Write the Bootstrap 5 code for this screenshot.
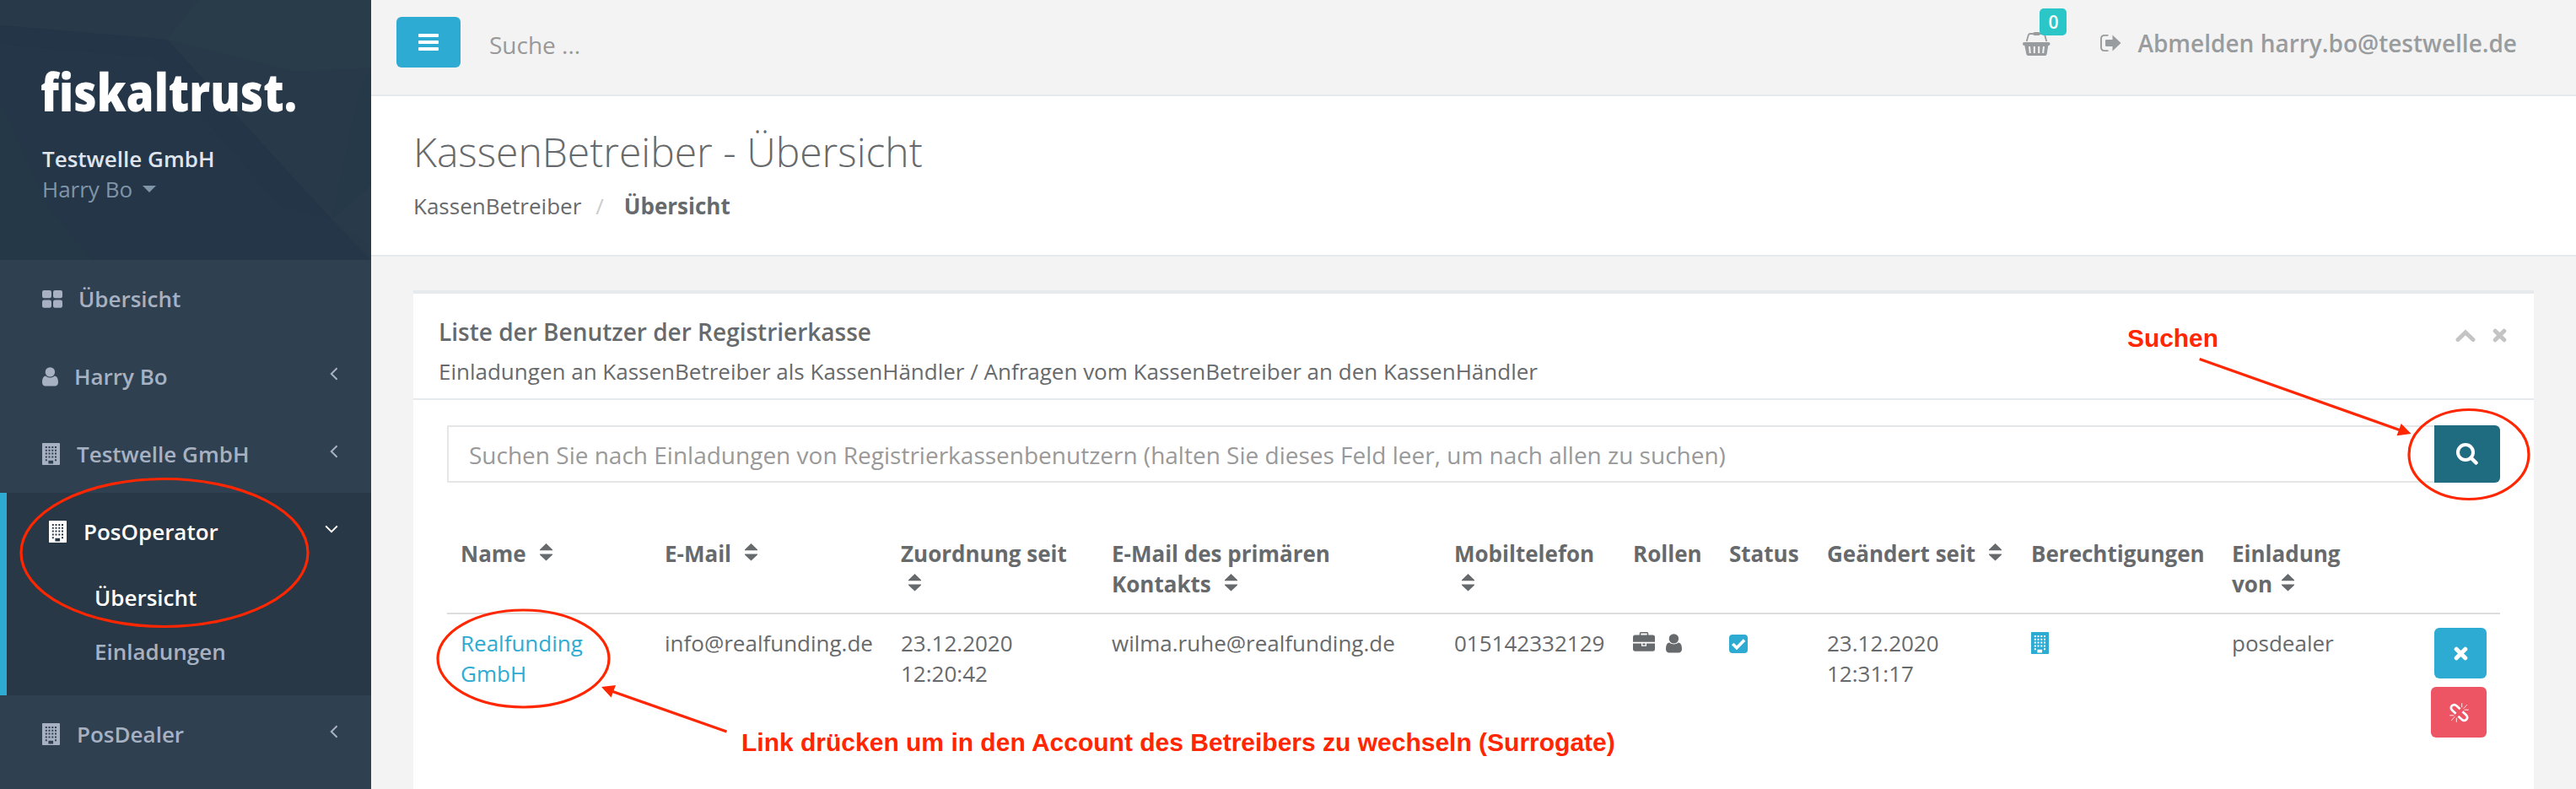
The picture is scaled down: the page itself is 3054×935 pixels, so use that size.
<!DOCTYPE html>
<html lang="de">
<head>
<meta charset="utf-8">
<title>KassenBetreiber - Übersicht</title>
<link rel="stylesheet" href="https://cdn.jsdelivr.net/npm/bootstrap@5.3.0/dist/css/bootstrap.min.css">
<style>
body{font-family:"Open Sans","Noto Sans",sans-serif;font-size:26px;line-height:36px;color:#676a6c;background:#f3f3f3}
a{text-decoration:none;color:inherit}
svg{display:block;flex:none;fill:currentColor}
.shell{height:935px;overflow:hidden}
/* sidebar */
.side{width:440px;background:#2f4050;color:#a7b1c2;font-weight:600;flex:none}
.side-head{height:308px;background:#243647;padding:72px 50px 0 49px}
.side-head .facets{left:0;top:0}
.brand{margin-bottom:26px;overflow:visible}
.brand text{font-weight:800;font-size:62px;fill:#fff}
.company{color:#dfe4ed;padding-left:1px}
.person{color:#8095a8;font-weight:400;padding-left:1px}
.person svg{margin-left:12px}
.item{height:92px;padding:28px 39px 28px 50px;gap:20px}
.item.tight{gap:19px}
.item .arrow{margin-left:auto;margin-top:-6px}
.current{background:#293846;border-left:8px solid #2eabd2;color:#fff;height:240px}
.sub{padding:14px 0 14px 104px;height:64px}
.sub.idle{color:#a7b1c2}
/* top bar */
.topbar{height:114px;border-bottom:2px solid #e7eaec;padding:20px 70px 0 30px}
.btn-tool{border:0;border-radius:6px;padding:0;display:flex;align-items:center;justify-content:center;color:#fff}
.btn-menu{width:76px;height:60px;background:#2eabd2}
.hint{font-size:28px;color:#999;margin:15px 0 0 34px}
.basket{color:#999c9e;margin:18px 58px 0 auto;width:33px}
.basket .badge{left:20px;top:-28px;width:32px;height:32px;font-size:21px;line-height:32px;padding:0;border-radius:5px;background:#2ac6c8;font-weight:600}
.logout{font-size:28px;color:#999c9e;font-weight:600;margin-top:13px;gap:19px}
/* page heading */
.heading{height:190px;border-bottom:2px solid #e7eaec;padding:39px 50px 0;background:#fff}
.heading h2{font-size:48px;font-weight:300;line-height:53px;margin:0 0 20px}
.crumbs .sep{color:#ccc;margin:0 24px 0 17px}
/* panel */
.panel{margin:40px 50px 0;border:0;border-top:4px solid #e7eaec;border-radius:0;background:#fff;height:591px;color:inherit}
.panel-top{height:126px;border-bottom:2px solid #e7eaec;padding:30px 32px 0 30px}
.panel-top h5{font-size:28px;line-height:31px;font-weight:600;margin:0 0 13px}
.tools{color:#c4c4c4;gap:20px;margin-top:11px}
.panel-body{padding:30px 40px 0}
.finder{height:68px;margin-bottom:50px}
.finder .field{border:2px solid #e5e6e7;border-right:0;border-radius:2px 0 0 2px;padding:16px 24px 0;font-size:28px;line-height:34px;color:#999}
.btn-find{width:78px;background:#1f6b80;border-radius:0 6px 6px 0}
.grid{table-layout:fixed;width:2434px;margin:0;border-collapse:separate;border-spacing:0}
.grid>:not(caption)>*>*{padding:16px;border:0;color:#676a6c;vertical-align:top;background:none}
.grid>thead>tr>th{border-bottom:2px solid #ddd;height:106px}
.grid svg{display:inline-block;vertical-align:top}
.grid .sort{margin:6px 0 0 9px}
.grid .lnk{color:#2eabd2}
.roles{gap:13px;padding-top:5px}
.roles svg+svg{margin-top:2px}
.state{margin-top:8px}
.rights{margin-top:5px}
.acts{gap:10px}
.b1{width:62px;height:60px;background:#2eabd2}
.b2{width:66px;height:60px;background:#ed5565}
.notes{left:0;top:0;pointer-events:none}
.notes text{font-family:"Liberation Sans",Arial,sans-serif;font-weight:700;font-size:30px;fill:#ff2600}
</style>
</head>
<body>
<svg width="0" height="0" class="position-absolute">
<symbol id="i-grid" viewBox="0 0 24 21"><rect width="11" height="9.3" rx="2.2"/><rect x="13" width="11" height="9.3" rx="2.2"/><rect y="11.5" width="11" height="9.3" rx="2.2"/><rect x="13" y="11.5" width="11" height="9.3" rx="2.2"/></symbol>
<symbol id="i-user" viewBox="0 0 19 23"><circle cx="9.4" cy="5.9" r="5.7"/><path d="M4.3 10.4C1 10.8 0 14 0 18.300c0 2.600 1.500 4.200 3.800 4.200h11.300c2.300 0 3.900-1.600 3.900-4.200 0-4.300-1-7.500-4.500-7.900-2.900 2.700-7.300 2.700-10.200 0z"/></symbol>
<symbol id="i-build" viewBox="0 0 21 26"><path fill-rule="evenodd" d="M.7 0h19.600q.7 0 .7.700v24.600q0 .7-.7.700H.7q-.7 0-.7-.7V.7Q0 0 .7 0zM3.800 4v2h2V4zm3.700 0v2h2V4zm3.800 0v2h2V4zM15 4v2h2V4zM3.800 7.800v2h2v-2zm3.700 0v2h2v-2zm3.800 0v2h2v-2zm3.700 0v2h2v-2zM3.800 11.600v2h2v-2zm3.700 0v2h2v-2zm3.800 0v2h2v-2zm3.700 0v2h2v-2zM3.800 15.400v2h2v-2zm3.700 0v2h2v-2zm3.800 0v2h2v-2zm3.700 0v2h2v-2zM3.800 19.200v2h2v-2zm11.200 0v2h2v-2zM7.400 20.700v3.700h5.700v-3.700z"/></symbol>
<symbol id="i-left" viewBox="0 0 10 16"><path d="M8.600 1.200 1.800 8l6.800 6.800" fill="none" stroke="currentColor" stroke-width="2"/></symbol>
<symbol id="i-sort" viewBox="0 0 15 21"><path d="M7.500 0 15 7.200v1H0v-1zM0 12.400h15v1L7.500 20.600 0 13.400z"/></symbol>
<symbol id="i-x" viewBox="0 0 17 17"><path d="M3.200 3.200l10.600 10.600M13.800 3.200 3.200 13.800" fill="none" stroke="currentColor" stroke-width="5" stroke-linecap="round"/></symbol>
</svg>
<div class="shell d-flex position-relative">
<nav class="side">
  <div class="side-head position-relative">
    <svg class="facets position-absolute" width="440" height="308"><path d="M0 0h440v308L393 260 198 47 0 30z" fill="#283a49"/><path d="M198 47 235 0h205v80l-90 5z" fill="#293c4a"/><path d="M393 260l32-150 15-30v140z" fill="#263949"/><path d="M393 260l47-40v73z" fill="#293b4b"/><path d="M0 30l198 17 195 213-60-15L180 68 0 52z" fill="#233546"/><path d="M0 120l60 130 50 58H0z" fill="#253848"/></svg>
    <svg class="brand position-relative" width="305" height="72"><text x="-1" y="60" textLength="304" lengthAdjust="spacingAndGlyphs">fiskaltrust.</text></svg>
    <div class="company position-relative">Testwelle GmbH</div>
    <div class="person position-relative d-flex align-items-center">Harry Bo<svg width="16" height="8"><path d="M0 0h16L8 8z"/></svg></div>
  </div>
  <a class="item tight d-flex align-items-center" href="#"><svg width="24" height="21"><use href="#i-grid"/></svg>Übersicht</a>
  <a class="item tight d-flex align-items-center" href="#"><svg width="19" height="23"><use href="#i-user"/></svg>Harry Bo<svg class="arrow" width="10" height="16"><use href="#i-left"/></svg></a>
  <a class="item d-flex align-items-center" href="#"><svg width="21" height="26"><use href="#i-build"/></svg>Testwelle GmbH<svg class="arrow" width="10" height="16"><use href="#i-left"/></svg></a>
  <div class="current">
    <a class="item d-flex align-items-center" href="#"><svg width="21" height="26"><use href="#i-build"/></svg>PosOperator<svg class="arrow" width="16" height="10"><path d="M1.200 1.400 8 8.200l6.800-6.800" fill="none" stroke="currentColor" stroke-width="2"/></svg></a>
    <a class="sub d-block" href="#">Übersicht</a>
    <a class="sub idle d-block" href="#">Einladungen</a>
  </div>
  <a class="item d-flex align-items-center" href="#"><svg width="21" height="26"><use href="#i-build"/></svg>PosDealer<svg class="arrow" width="10" height="16"><use href="#i-left"/></svg></a>
</nav>
<main class="flex-grow-1">
  <header class="topbar d-flex align-items-start">
    <button class="btn-tool btn-menu"><svg width="24" height="20"><rect width="24" height="4" rx="1"/><rect y="8" width="24" height="4" rx="1"/><rect y="16" width="24" height="4" rx="1"/></svg></button>
    <span class="hint">Suche ...</span>
    <a class="basket position-relative" href="#"><svg width="33" height="28" viewBox="0 0 33 28"><path d="M4.700 11 6.800 3.600Q7.400 2 9 2h15q1.600 0 2.200 1.600L28.300 11" fill="none" stroke="currentColor" stroke-width="1.800"/><rect x="12.500" width="8" height="4" rx="1.500"/><path fill-rule="evenodd" d="M1.800 12h29q1.700 0 1.700 2t-1.700 2h-.5l-1.700 10.200Q28.300 28 26.500 28h-20q-1.800 0-2.100-1.800L2.300 16h-.5Q0 16 0 14t1.800-2zM7 17l.8 8h2L9 17zm5.800 0v8h2v-8zm5.400 0v8h2v-8zm5.800 0-.8 8h2l.8-8z"/></svg><span class="badge position-absolute">0</span></a>
    <a class="logout d-flex align-items-center" href="#"><svg width="26" height="22" viewBox="0 0 26 22"><path d="M10.500 1.900H6.200Q2 1.900 2 6v10q0 4.100 4.200 4.100h4.300" fill="none" stroke="currentColor" stroke-width="1.900"/><path d="M15.500 1.500 25.500 11l-10 9.500V15H8.200q-1.200 0-1.200-1.200V8.200Q7 7 8.200 7h7.300z"/></svg><span>Abmelden harry.bo@testwelle.de</span></a>
  </header>
  <section class="heading">
    <h2>KassenBetreiber - Übersicht</h2>
    <div class="crumbs d-flex"><a href="#">KassenBetreiber</a><span class="sep">/</span><strong>Übersicht</strong></div>
  </section>
  <section class="panel card">
    <div class="panel-top d-flex justify-content-between">
      <div><h5>Liste der Benutzer der Registrierkasse</h5><div>Einladungen an KassenBetreiber als KassenHändler / Anfragen vom KassenBetreiber an den KassenHändler</div></div>
      <div class="tools d-flex"><svg width="24" height="17"><path d="M3 13.500 12 5l9 8.500" fill="none" stroke="currentColor" stroke-width="5" stroke-linecap="round"/></svg><svg width="17" height="17"><use href="#i-x"/></svg></div>
    </div>
    <div class="panel-body">
      <div class="finder d-flex"><div class="field flex-grow-1">Suchen Sie nach Einladungen von Registrierkassenbenutzern (halten Sie dieses Feld leer, um nach allen zu suchen)</div><button class="btn-tool btn-find"><svg width="26" height="26"><circle cx="11" cy="11" r="9" fill="none" stroke="currentColor" stroke-width="4"/><path d="M17.500 17.500l6 6" stroke="currentColor" stroke-width="4.500" stroke-linecap="round"/></svg></button></div>
      <table class="table grid">
        <colgroup><col width="242"><col width="280"><col width="250"><col width="406"><col width="212"><col width="114"><col width="116"><col width="242"><col width="238"><col width="200"><col width="134"></colgroup>
        <thead><tr>
          <th>Name <svg class="sort" width="15" height="21"><use href="#i-sort"/></svg></th>
          <th>E-Mail <svg class="sort" width="15" height="21"><use href="#i-sort"/></svg></th>
          <th>Zuordnung seit <svg class="sort" width="15" height="21"><use href="#i-sort"/></svg></th>
          <th>E-Mail des primären<br>Kontakts <svg class="sort" width="15" height="21"><use href="#i-sort"/></svg></th>
          <th>Mobiltelefon <svg class="sort" width="15" height="21"><use href="#i-sort"/></svg></th>
          <th>Rollen</th><th>Status</th>
          <th class="text-nowrap">Geändert seit <svg class="sort" width="15" height="21"><use href="#i-sort"/></svg></th>
          <th>Berechtigungen</th>
          <th>Einladung<br>von <svg class="sort ms-1" width="15" height="21"><use href="#i-sort"/></svg></th><th></th>
        </tr></thead>
        <tbody><tr>
          <td><a class="lnk" href="#">Realfunding GmbH</a></td><td>info@realfunding.de</td><td>23.12.2020<br>12:20:42</td><td>wilma.ruhe@realfunding.de</td><td>015142332129</td>
          <td><div class="roles d-flex"><svg width="26" height="23" viewBox="0 0 26 23"><path d="M8.500 4V1.600q0-.8.800-.8h7.400q.8 0 .8.800V4" fill="none" stroke="currentColor" stroke-width="1.500"/><path d="M2.500 3.600h21q2.500 0 2.500 2.500v5.700H0V6.100q0-2.500 2.500-2.500zM0 13.400h10v3.300h6v-3.300h10v7q0 2.400-2.500 2.400h-21Q0 22.800 0 20.400zm11.300 0h3.400v2h-3.400z"/></svg><svg width="19" height="23"><use href="#i-user"/></svg></div></td>
          <td><svg width="22" height="22" class="lnk state" viewBox="0 0 22 22"><rect width="22" height="22" rx="4"/><path d="M4.200 11l4.800 4.800 9-9.300" fill="none" stroke="#fff" stroke-width="3.600"/></svg></td>
          <td>23.12.2020<br>12:31:17</td>
          <td><svg width="21" height="26" class="lnk rights"><use href="#i-build"/></svg></td>
          <td>posdealer</td>
          <td><div class="acts d-flex flex-column align-items-end"><button class="btn-tool b1"><svg width="17" height="17"><use href="#i-x"/></svg></button><button class="btn-tool b2"><svg width="23" height="23" viewBox="0 0 23 23"><g fill="none" stroke="currentColor" stroke-width="2.700"><path d="M7.600 12.700 2.800 8.300Q.8 5.600 3 3.200 5.700.9 8.200 3.200l4.400 4"/><path d="M15.400 10.300l4.800 4.400q2 2.700-.2 5.100-2.700 2.300-5.200 0l-4.400-4"/></g><path d="M14.700 5.300V.2M16.700 6.700l4-4.500M17.600 8.200h5.200M8.300 17.700v5.100M6.300 16.300l-4 4.500M5.400 14.800H.2" fill="none" stroke="currentColor" stroke-opacity=".85"/></svg></button></div></td>
        </tr></tbody>
      </table>
    </div>
  </section>
</main>
<svg class="notes position-absolute" width="3054" height="935">
  <g fill="none" stroke="#ff2600" stroke-width="3.200"><ellipse cx="195" cy="655" rx="170" ry="87.500"/><ellipse cx="620.500" cy="780.500" rx="101.500" ry="57.500"/><ellipse cx="2927" cy="538.500" rx="71" ry="53"/><path d="M861.500 867 725 819M2607.700 425.400 2846 510"/></g>
  <path d="M713 814l17-2-5.500 14.500zM2858.500 514l-17 2.300 5.300-14.300z" fill="#ff2600"/>
  <text x="2522" y="411" textLength="108" lengthAdjust="spacingAndGlyphs">Suchen</text>
  <text x="879" y="890">Link drücken um in den Account des Betreibers zu wechseln (Surrogate)</text>
</svg>
</div>
<script src="https://cdn.jsdelivr.net/npm/bootstrap@5.3.0/dist/js/bootstrap.bundle.min.js"></script>
</body>
</html>
